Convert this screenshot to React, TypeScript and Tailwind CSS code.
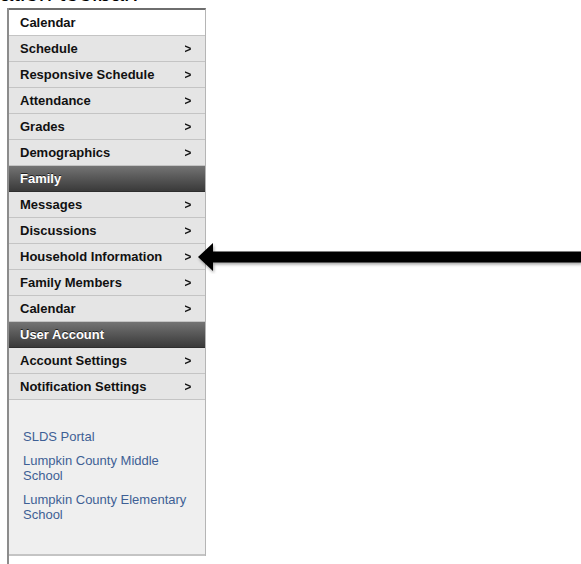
const font = { fontFamily: '"Liberation Sans", Arial, Helvetica, sans-serif' };

type Item = { label: string; kind: 'link' | 'section' };

const items: Item[] = [
  { label: 'Schedule', kind: 'link' },
  { label: 'Responsive Schedule', kind: 'link' },
  { label: 'Attendance', kind: 'link' },
  { label: 'Grades', kind: 'link' },
  { label: 'Demographics', kind: 'link' },
  { label: 'Family', kind: 'section' },
  { label: 'Messages', kind: 'link' },
  { label: 'Discussions', kind: 'link' },
  { label: 'Household Information', kind: 'link' },
  { label: 'Family Members', kind: 'link' },
  { label: 'Calendar', kind: 'link' },
  { label: 'User Account', kind: 'section' },
  { label: 'Account Settings', kind: 'link' },
  { label: 'Notification Settings', kind: 'link' },
];

const schools = ['SLDS Portal', 'Lumpkin County Middle School', 'Lumpkin County Elementary School'];

function NavRow({ item }: { item: Item }) {
  if (item.kind === 'section') {
    return (
      <div className="flex h-[26px] items-center border-b border-[#2e2e2e] bg-gradient-to-b from-[#747474] to-[#3a3a3a] pl-[11px] text-[13px] font-bold text-white [text-shadow:0_-1px_0_#222]">
        {item.label}
      </div>
    );
  }
  return (
    <div className="flex h-[26px] items-center justify-between border-b border-[#c4c4c4] bg-[#e5e5e5] pl-[11px] pr-[13px] text-[13px] font-bold text-[#111]">
      <span>{item.label}</span>
      <span className="scale-x-90 text-[13px] font-black">&gt;</span>
    </div>
  );
}

function Arrow() {
  return (
    <svg className="absolute left-[196px] top-[240px]" width="385" height="34" viewBox="0 0 385 34">
      <defs>
        <filter id="drop" x="-5%" y="-50%" width="110%" height="200%">
          <feDropShadow dx="1" dy="2" stdDeviation="1.5" floodColor="#000" floodOpacity="0.35" />
        </filter>
      </defs>
      <path d="M2 17 L17 3 L17 11.5 L385 11.5 L385 22.5 L17 22.5 L17 31 Z" fill="#000" filter="url(#drop)" />
    </svg>
  );
}

export default function App() {
  return (
    <div className="relative h-[564px] w-[581px] overflow-hidden bg-white" style={font}>
      <div className="h-[8px] overflow-hidden">
        <div className="-mt-[20px] text-[24px] leading-[26px] text-black">ation toolbar:</div>
      </div>
      <div className="ml-[7px] flex h-[556px] w-[199px] flex-col border-l-2 border-[#8c8c8c]">
        <div className="flex flex-col border-r border-t-2 border-[#6e6e6e] border-r-[#b5b5b5]">
          <div className="flex h-[26px] items-center border-b border-[#c4c4c4] bg-white pl-[11px] text-[13px] font-bold text-[#111]">
            Calendar
          </div>
          {items.map((item, i) => (
            <NavRow key={i} item={item} />
          ))}
          <div className="flex h-[156px] flex-col gap-[9px] border-b-2 border-[#c4c4c4] bg-[#efefef] pl-[14px] pr-[8px] pt-[29px] text-[13px] leading-[15px] text-[#3e5f95]">
            {schools.map((s) => (
              <span key={s} className={s.includes('Middle') ? 'max-w-[160px]' : ''}>
                {s}
              </span>
            ))}
          </div>
        </div>
      </div>
      <Arrow />
    </div>
  );
}
